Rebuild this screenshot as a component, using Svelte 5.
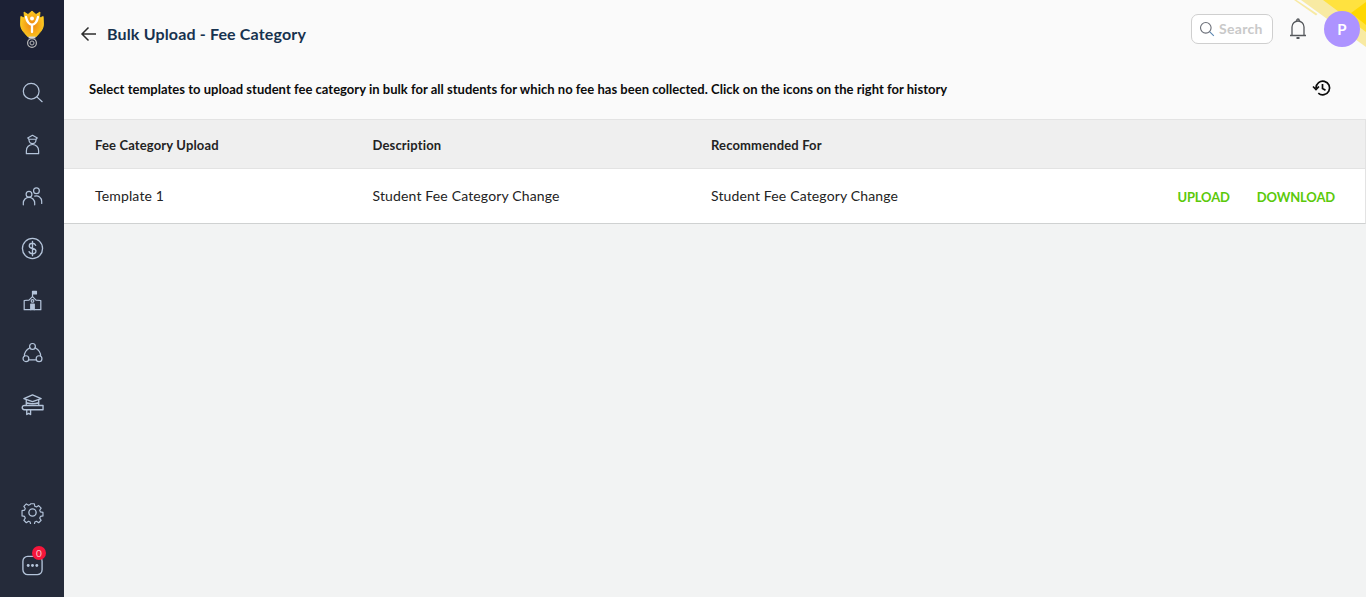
<script>
  const columns = ['Fee Category Upload', 'Description', 'Recommended For'];
</script>

<div class="shell">
  <aside class="side">
    <div class="logo">
      <svg width="26" height="48" viewBox="0 0 26 48">
        <defs>
          <radialGradient id="tulip" cx="50%" cy="55%" r="58%">
            <stop offset="0%" stop-color="#ee8412"/>
            <stop offset="100%" stop-color="#fece22"/>
          </radialGradient>
        </defs>
        <path d="M1.800 10.500 L5.500 12 L5 6 L9 8.500 L13 5 L17 8.500 L21 6 L20.500 12 L24.200 10.500 L24.500 18 C24.500 24 20 27 17.500 30.500 H8.500 C6 27 1.500 24 1.500 18Z" fill="url(#tulip)" stroke="#fece22" stroke-width=".8" stroke-linejoin="round"/>
        <circle cx="13" cy="12.500" r="2" fill="#fff"/>
        <path d="M7 11 C8 16 11 18.500 13 19 C15 18.500 18 16 19 11 M13 18.500 V26" fill="none" stroke="#fff" stroke-width="2.300" stroke-linecap="round"/>
        <rect x="9.500" y="30.500" width="7" height="1.800" fill="#d9d9d9"/>
        <circle cx="13" cy="37" r="4.400" fill="none" stroke="#b9b9b9" stroke-width="1.200"/>
        <circle cx="13" cy="37" r="2" fill="none" stroke="#b9b9b9" stroke-width="1"/>
      </svg>
    </div>
    <nav class="nav">
      <div class="item"><svg class="ico" viewBox="0 0 24 24"><circle cx="10.500" cy="10.500" r="9"/><path d="M17 17l6 5.500"/></svg></div>
      <div class="item"><svg class="ico" viewBox="0 0 24 24"><path d="M6.500 4.500L12 1.500l5.500 3-1.500 1.500H8z"/><path d="M8 6.500a4 4.500 0 0 0 8 0"/><path d="M5 22.500v-3.500a7 7 0 0 1 14 0v3.500z"/></svg></div>
      <div class="item"><svg class="ico" viewBox="0 0 24 24"><circle cx="8" cy="9.500" r="3.300"/><circle cx="16.500" cy="5.500" r="3.300"/><path d="M1.500 21.500v-2a6.500 6.500 0 0 1 13 0v2"/><path d="M14.500 11.500a6.200 6.200 0 0 1 8 6v2.500"/></svg></div>
      <div class="item"><svg class="ico big" viewBox="0 0 24 24"><circle cx="12" cy="12" r="10.500"/><path d="M15.300 8.700c-.5-1.500-1.900-2.200-3.300-2.200-2 0-3.400 1-3.400 2.800 0 3.700 7 1.700 7 5.400 0 1.800-1.600 2.800-3.600 2.800-1.700 0-3.100-.7-3.600-2.300M12 4.500v15"/></svg></div>
      <div class="item"><svg class="ico" viewBox="0 0 24 24"><path d="M2.500 12l5.500-.5 4-4 4 4 5.500.5v10.500H2.500z"/><circle cx="12" cy="12.500" r="1.500"/><path d="M10 22.500v-6.500h4v6.500" fill="#b4c4da"/><path d="M12 7.500V1.500h4.500V4.500H12" fill="#b4c4da"/></svg></div>
      <div class="item"><svg class="ico" viewBox="0 0 24 24"><circle cx="12" cy="5" r="3.300"/><circle cx="4.500" cy="19" r="3.300"/><circle cx="19.500" cy="19" r="3.300"/><path d="M9 6.500C5.500 8.500 2.500 11.500 2.800 16M15 6.500c3.500 2 6.500 5 6.200 9.500M8 20.500h8"/></svg></div>
      <div class="item"><svg class="ico big" viewBox="0 0 24 24"><path d="M12 2l9 3.800L12 9 3 5.800z"/><path d="M5.500 7.500v4.500M18.500 7.500v4.500M5.500 10c4 1.500 9 1.500 13 0"/><path d="M23 13H3.500a2.200 2.200 0 0 0 0 4.500H23z"/><path d="M6 17.500v5l2-1.300 2 1.300v-5"/></svg></div>
    </nav>
    <div class="bottom">
      <div class="item gear"><svg class="ico big" viewBox="0 0 24 24"><circle cx="12" cy="12" r="3.800"/><path d="M9.800 1.500h4.400l.6 3 2 .9 2.600-1.700 3 3-1.700 2.600.9 2 3 .6v4.200l-3 .6-.9 2 1.700 2.600-3 3-2.600-1.700-2 .9-.6 3H9.800l-.6-3-2-.9-2.600 1.700-3-3 1.700-2.600-.9-2-3-.6V9.800l3-.6.900-2-1.700-2.600 3-3 2.600 1.700 2-.9z" transform="translate(1.600 1.600) scale(.867)"/></svg></div>
      <div class="item chat">
        <svg class="ico big" viewBox="0 0 24 24"><rect x="2" y="2.500" width="20" height="19" rx="5"/><g class="dots"><circle cx="7.500" cy="12" r="1.500"/><circle cx="12" cy="12" r="1.500"/><circle cx="16.500" cy="12" r="1.500"/></g></svg>
        <span class="badge">0</span>
      </div>
    </div>
  </aside>

  <main class="main">
    <div class="top">
      <svg class="corner" width="72" height="48" viewBox="0 0 72 48">
        <path d="M0 0L22 15.500L23.500 14L2.500 0Z" fill="#f8eaa3"/>
        <path d="M7 0L72 47V0Z" fill="#f8eaa3"/>
        <path d="M29 0L72 32V0Z" fill="#ffe23f"/>
        <path d="M72 2L57 13L72 25Z" fill="#ffd700"/>
      </svg>
      <header class="head">
        <div class="title">
          <svg class="back" width="18" height="18" viewBox="0 0 18 18"><path d="M16 9H2.500M8.500 2.500L2 9l6.500 6.500"/></svg>
          <h1>Bulk Upload - Fee Category</h1>
        </div>
        <div class="actions">
          <div class="search">
            <svg width="16" height="16" viewBox="0 0 16 16"><circle cx="6.800" cy="6.800" r="5.300" fill="none" stroke="#6b6f78" stroke-width="1.100"/><path d="M10.800 10.800l4 4" stroke="#5b86b0" stroke-width="1.100"/></svg>
            <span>Search</span>
          </div>
          <svg class="bell" width="18" height="22" viewBox="0 0 18 22"><path d="M3 17V9a6 6 0 0 1 12 0v8M1 17.500h16"/><path d="M7.800 3V2.200a1.200 1.200 0 0 1 2.400 0V3"/><path d="M7.500 20h3" stroke-width="2"/></svg>
          <div class="avatar">P</div>
        </div>
      </header>
      <div class="desc">
        <p>Select templates to upload student fee category in bulk for all students for which no fee has been collected. Click on the icons on the right for history</p>
        <svg class="history" width="20" height="20" viewBox="0 0 20 20"><path d="M4 10a6.800 6.800 0 1 1 2.300 5.100"/><path d="M1 8.500l3 3 3-3" /><path d="M10.500 6v4.500l3 1.700"/></svg>
      </div>
    </div>

    <div class="table">
      <div class="row thead">
        {#each columns as c}<div>{c}</div>{/each}
        <div></div>
      </div>
      <div class="row tbody">
        <div>Template 1</div>
        <div>Student Fee Category Change</div>
        <div>Student Fee Category Change</div>
        <div class="links"><span>UPLOAD</span><span>DOWNLOAD</span></div>
      </div>
    </div>
  </main>
</div>

<style>
  :global(body) { margin: 0; background: #f2f3f3; }
  .shell { display: flex; height: 597px; overflow: hidden; font-family: Lato, "Open Sans", sans-serif; }
  .side { width: 64px; flex: none; background: #252b3a; display: flex; flex-direction: column; }
  .logo { height: 60px; background: #1c2135; display: flex; justify-content: center; align-items: center; }
  .nav { display: flex; flex-direction: column; padding-top: 6px; }
  .item { height: 52px; display: flex; align-items: center; justify-content: center; position: relative; }
  .gear { padding-bottom: 2px; box-sizing: border-box; }
  .bottom { margin-top: auto; padding-bottom: 6px; }
  .ico { width: 21px; height: 21px; fill: none; stroke: #b4c4da; stroke-width: 1.400; stroke-linecap: round; stroke-linejoin: round; }
  .ico.big { width: 23px; height: 23px; }
  .dots { fill: #b4c4da; stroke: none; }
  .badge { position: absolute; top: 7px; left: 32px; width: 14px; height: 14px; border-radius: 50%; background: #f5163b; color: #f8c4cc; font-size: 10px; line-height: 14px; text-align: center; }
  .main { flex: 1; min-width: 0; }
  .top { background: #fafafa; height: 119px; position: relative; border-bottom: 1px solid #e3e3e3; box-sizing: content-box; }
  .corner { position: absolute; top: 0; right: 0; }
  .head { height: 68px; display: flex; justify-content: space-between; align-items: center; padding: 0 6px 0 16px; position: relative; }
  .title { display: flex; align-items: center; gap: 9px; }
  .back { fill: none; stroke: #2c2c2c; stroke-width: 1.500; }
  h1 { margin: 0 0 2px; font-size: 16px; font-weight: 700; color: #17324f; letter-spacing: .16px; }
  .actions { display: flex; align-items: center; margin-top: -11px; }
  .search { height: 28px; border: 1px solid #cfcfcf; border-radius: 7px; background: #fff; display: flex; align-items: center; gap: 4px; padding-left: 7px; width: 73px; }
  .search span { color: #c9c9c9; font-size: 14px; font-weight: 700; letter-spacing: .3px; }
  .bell { margin-left: 16px; fill: none; stroke: #55585c; stroke-width: 1.300; }
  .avatar { margin-left: 17px; width: 36px; height: 36px; border-radius: 50%; background: #ad93ff; color: #fff; font-size: 15px; font-weight: 700; display: flex; align-items: center; justify-content: center; position: relative; }
  .desc { display: flex; justify-content: space-between; align-items: center; padding: 0 34px 0 25px; margin-top: 1px; height: 40px; }
  .desc p { margin: 0; font-size: 13px; font-weight: 700; color: #0c0c0c; letter-spacing: .02px; }
  .history { fill: none; stroke: #0b0b0b; stroke-width: 1.700; margin-top: -3px; }
  .table { background: #fff; border-bottom: 1px solid #cfd1d1; border-right: 1px solid #e3e3e3; }
  .row { display: grid; grid-template-columns: 277.500px 338.500px 1fr auto; padding: 0 30px 0 31px; align-items: center; font-size: 14px; color: #232323; letter-spacing: .15px; }
  .thead { height: 46px; padding-top: 2px; background: #efefef; border-bottom: 1px solid #e3e3e3; font-weight: 700; font-size: 13px; }
  .tbody { height: 52px; padding-bottom: 2px; }
  .links { display: flex; gap: 27px; padding-top: 3px; color: #5bc90a; font-weight: 700; font-size: 13px; letter-spacing: -.15px; }
</style>
